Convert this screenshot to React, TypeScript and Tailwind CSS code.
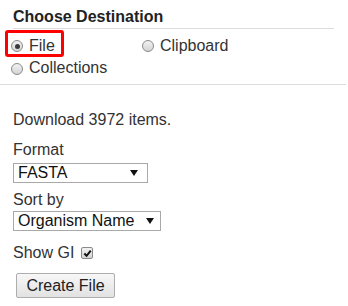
const Radio = ({ checked }: { checked?: boolean }) => (
  <span className="flex h-[12px] w-[12px] shrink-0 items-center justify-center rounded-full border border-[#8a8a8a] bg-gradient-to-b from-[#f2f2f2] to-[#d4d4d4]">
    {checked && <span className="h-[5px] w-[5px] rounded-full bg-[#3a3a3a]" />}
  </span>
);

const Arrow = () => (
  <svg viewBox="0 0 8 6" className="h-[6px] w-[8px]">
    <polygon points="0,0 8,0 4,6" fill="#111" />
  </svg>
);

const App = () => {
  return (
    <div className="h-[306px] w-[348px] bg-white font-['Liberation_Sans',Arial,sans-serif] text-[16px] leading-[18px] text-[#333]">
      <div className="pl-[13px] pr-[14px] pt-[8px]">
        <h3 className="border-b border-[#dcdcdc] pb-[2px] font-bold text-[#222]">Choose Destination</h3>
      </div>

      <div className="w-[346px] border-b border-[#dcdcdc] pb-[7px] pt-[1px]">
        <div className="flex items-start">
          <div className="ml-[5px] flex h-[27px] w-[59px] items-start gap-[6px] rounded-[3px] border-[3px] border-[#ff0000] pl-[3px] pt-[4px]">
            <span className="mt-[3px]">
              <Radio checked />
            </span>
            <span>File</span>
          </div>
          <label className="ml-[78px] mt-[7px] flex items-start gap-[6px]">
            <span className="mt-[3px]">
              <Radio />
            </span>
            <span>Clipboard</span>
          </label>
        </div>
        <label className="ml-[11px] mt-[2px] flex items-start gap-[6px]">
          <span className="mt-[4px]">
            <Radio />
          </span>
          <span>Collections</span>
        </label>
      </div>

      <div className="px-[13px] pt-[26px]">
        <p>Download 3972 items.</p>
        <p className="mt-[12px]">Format</p>
        <div className="mt-[4px] flex h-[20px] w-[135px] items-center justify-between border border-[#a9a9a9] bg-white pl-[4px] pr-[9px] leading-none text-[#111]">
          <span>FASTA</span>
          <Arrow />
        </div>
        <p className="mt-[8px]">Sort by</p>
        <div className="mt-[2px] flex h-[20px] w-[148px] items-center justify-between border border-[#a9a9a9] bg-white pl-[4px] pr-[6px] leading-none text-[#111]">
          <span>Organism Name</span>
          <Arrow />
        </div>
        <div className="mt-[13px] flex items-start">
          <span>Show GI</span>
          <span className="ml-[7px] mt-[3px] flex h-[12px] w-[12px] items-center justify-center rounded-[2px] border border-[#8a8a8a] bg-gradient-to-b from-[#f2f2f2] to-[#d4d4d4]">
            <svg viewBox="0 0 10 10" className="h-[9px] w-[9px]">
              <path d="M1.5 5 L4 7.6 L8.6 1.8" fill="none" stroke="#111" strokeWidth="2.2" />
            </svg>
          </span>
        </div>
        <button className="ml-[3px] mt-[11px] flex h-[25px] w-[99px] items-center justify-center rounded-[2px] border border-[#adadad] bg-gradient-to-b from-[#f7f7f7] to-[#e2e2e2] text-[#222]">
          Create File
        </button>
      </div>
    </div>
  );
};

export default App;
